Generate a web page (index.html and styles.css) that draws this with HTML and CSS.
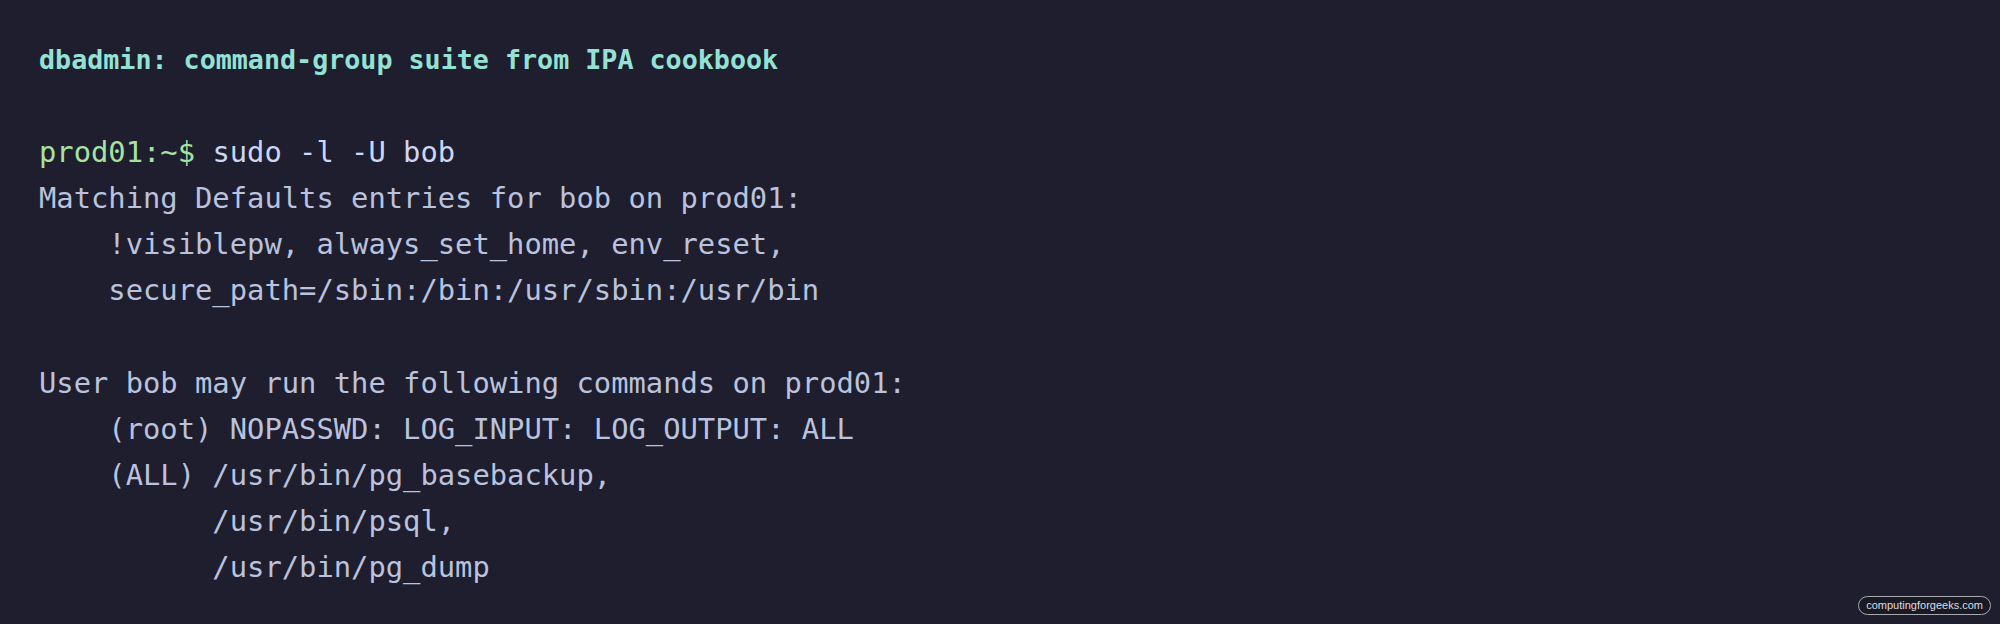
FILE: index.html
```html
<!DOCTYPE html>
<html>
<head>
<meta charset="utf-8">
<link rel="stylesheet" href="styles.css">
</head>
<body>
<main class="term">
<div class="line title">dbadmin: command-group suite from IPA cookbook</div>
<div class="line blank"></div>
<div class="line"><span class="prompt">prod01:~$</span> <span class="cmd">sudo -l -U bob</span></div>
<div class="line out">Matching Defaults entries for bob on prod01:</div>
<div class="line out">    !visiblepw, always_set_home, env_reset,</div>
<div class="line out">    secure_path=/sbin:/bin:/usr/sbin:/usr/bin</div>
<div class="line blank"></div>
<div class="line out">User bob may run the following commands on prod01:</div>
<div class="line out">    (root) NOPASSWD: LOG_INPUT: LOG_OUTPUT: ALL</div>
<div class="line out">    (ALL) /usr/bin/pg_basebackup,</div>
<div class="line out">          /usr/bin/psql,</div>
<div class="line out">          /usr/bin/pg_dump</div>
</main>
<div class="badge">computingforgeeks.com</div>
</body>
</html>
```
FILE: styles.css
```css
html, body {
  margin: 0;
  padding: 0;
  background: #1e1e2e;
  width: 2000px;
  height: 624px;
  overflow: hidden;
}
body {
  position: relative;
}
.term {
  padding: 37px 0 0 39px;
  font-family: "DejaVu Sans Mono", "Liberation Mono", monospace;
  font-size: 28.8px;
  line-height: 46.08px;
  color: #bac2de;
}
.line {
  white-space: pre;
  height: 46.08px;
}
.title {
  font-size: 26.7px;
  font-weight: bold;
  color: #94e2d5;
}
.prompt {
  color: #a6e3a1;
}
.cmd {
  color: #cdd6f4;
}
.out {
  color: #bac2de;
}
.badge {
  position: absolute;
  right: 9px;
  bottom: 9px;
  height: 17px;
  padding: 0 7px;
  border: 1px solid #a9a9b2;
  border-radius: 10px;
  background: #1a1a24;
  color: #dcdce0;
  font-family: "Liberation Sans", Arial, sans-serif;
  font-size: 11px;
  line-height: 17px;
}
```
